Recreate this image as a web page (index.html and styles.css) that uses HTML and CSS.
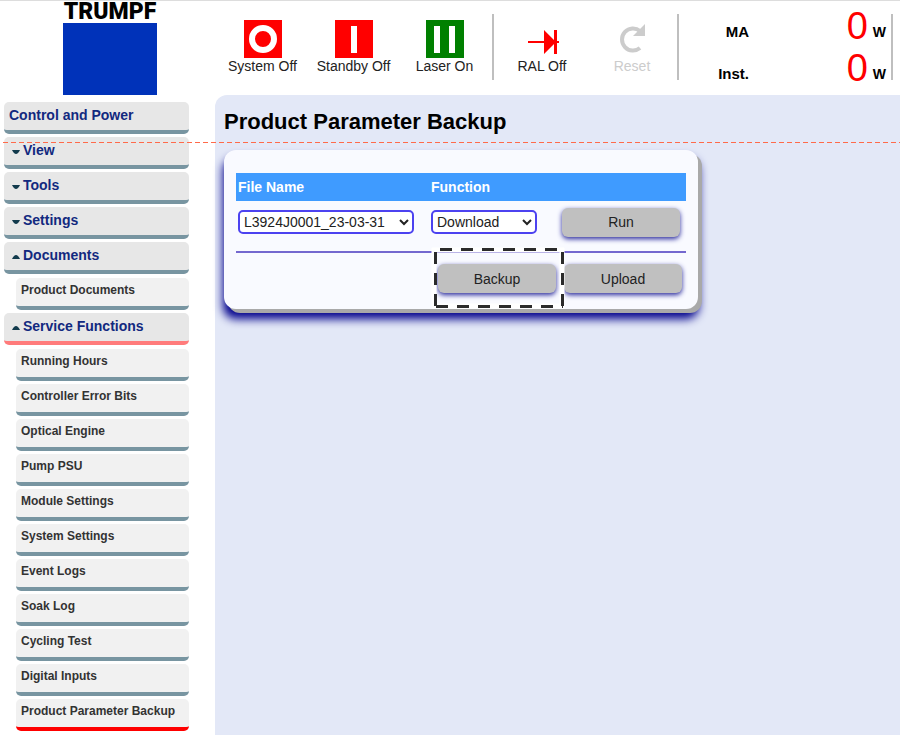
FILE: index.html
```html
<!DOCTYPE html>
<html lang="en">
<head>
<meta charset="utf-8">
<title>Product Parameter Backup</title>
<link rel="stylesheet" href="styles.css">
</head>
<body>
<div class="page">
  <aside class="side">
    <div class="logo">
      <span class="logo-name">TRUMPF</span>
      <div class="logo-square"></div>
    </div>
    <nav class="menu">
      <a class="item" href="#">Control and Power</a>
      <a class="item group" href="#"><svg class="caret" viewBox="0 0 8 4"><path d="M0 0h8Q6 4 4 4T0 0z"/></svg>View</a>
      <a class="item group" href="#"><svg class="caret" viewBox="0 0 8 4"><path d="M0 0h8Q6 4 4 4T0 0z"/></svg>Tools</a>
      <a class="item group" href="#"><svg class="caret" viewBox="0 0 8 4"><path d="M0 0h8Q6 4 4 4T0 0z"/></svg>Settings</a>
      <a class="item group" href="#"><svg class="caret" viewBox="0 0 8 4"><path d="M0 4h8Q6 0 4 0T0 4z"/></svg>Documents</a>
      <div class="submenu">
        <a class="item sub" href="#">Product Documents</a>
      </div>
      <a class="item group open" href="#"><svg class="caret" viewBox="0 0 8 4"><path d="M0 4h8Q6 0 4 0T0 4z"/></svg>Service Functions</a>
      <div class="submenu">
        <a class="item sub" href="#">Running Hours</a>
        <a class="item sub" href="#">Controller Error Bits</a>
        <a class="item sub" href="#">Optical Engine</a>
        <a class="item sub" href="#">Pump PSU</a>
        <a class="item sub" href="#">Module Settings</a>
        <a class="item sub" href="#">System Settings</a>
        <a class="item sub" href="#">Event Logs</a>
        <a class="item sub" href="#">Soak Log</a>
        <a class="item sub" href="#">Cycling Test</a>
        <a class="item sub" href="#">Digital Inputs</a>
        <a class="item sub current" href="#">Product Parameter Backup</a>
      </div>
    </nav>
  </aside>
  <div class="content">
    <header class="toolbar">
      <div class="tools tools-power">
        <button class="tool" type="button">
          <svg class="icon" viewBox="0 0 38 38"><rect width="38" height="38" fill="#f00"/><circle cx="19" cy="19" r="11" fill="none" stroke="#fff" stroke-width="6"/></svg>
          System Off
        </button>
        <button class="tool" type="button">
          <svg class="icon" viewBox="0 0 38 38"><rect width="38" height="38" fill="#f00"/><rect x="16" y="6" width="6" height="27" fill="#fff"/></svg>
          Standby Off
        </button>
        <button class="tool" type="button">
          <svg class="icon" viewBox="0 0 38 38"><rect width="38" height="38" fill="#008000"/><rect x="8" y="6" width="6" height="27" fill="#fff"/><rect x="23" y="6" width="6" height="27" fill="#fff"/></svg>
          Laser On
        </button>
      </div>
      <div class="tools tools-laser">
        <button class="tool" type="button">
          <svg class="icon" viewBox="0 0 38 38"><path d="M5 21h31v2H5zM21 10l12 12-12 12zM31 10h3v24h-3z" fill="#f00"/></svg>
          RAL Off
        </button>
        <button class="tool" type="button" disabled>
          <svg class="icon" viewBox="0 0 38 38"><path d="M27 28A11 11 0 1 1 27 11" fill="none" stroke="#ccc" stroke-width="4"/><path d="M32 4v12H20z" fill="#ccc"/></svg>
          Reset
        </button>
      </div>
      <dl class="readout">
        <div class="reading"><dt>MA</dt><dd><span class="value">0</span> W</dd></div>
        <div class="reading"><dt>Inst.</dt><dd><span class="value">0</span> W</dd></div>
      </dl>
    </header>
    <main class="main">
      <h1>Product Parameter Backup</h1>
      <form class="panel">
        <table>
          <thead>
            <tr><th class="col-file"><label for="file">File Name</label></th><th class="col-function"><label for="function">Function</label></th><th></th></tr>
          </thead>
          <tbody>
            <tr class="run-row">
              <td><select id="file" class="file"><option>L3924J0001_23-03-31</option></select></td>
              <td><select id="function" class="function"><option>Download</option></select></td>
              <td class="run-cell"><button class="button" type="button">Run</button></td>
            </tr>
            <tr class="backup-row">
              <td colspan="3">
                <div class="actions">
                  <div class="marked">
                    <button class="button" type="button">Backup</button>
                    <svg class="marker" viewBox="0 0 134 62"><path d="M3 1v60M131 1v60" class="marker-halo"/><path d="M1 3h132M1 59h132" class="marker-halo"/><path d="M4.500 5v56M131.500 5v56" class="marker-dash"/><path d="M9 2.500h122M5 59.500h127" class="marker-dash"/></svg>
                  </div>
                  <button class="button" type="button">Upload</button>
                </div>
              </td>
            </tr>
          </tbody>
        </table>
      </form>
    </main>
  </div>
  <div class="guide"></div>
</div>
</body>
</html>
```
FILE: styles.css
```css
* { box-sizing: border-box; }

body {
  margin: 0;
  background: #fff;
  color: #111;
  font: 14px/16px "Liberation Sans", Arial, sans-serif;
}

.page {
  position: relative;
  display: flex;
  min-height: 100vh;
  border-top: 1px solid #ddd;
}

/* Sidebar */
.side { flex: 0 0 215px; }

.logo {
  width: 94px;
  height: 94px;
  margin-left: 63px;
  display: flex;
  flex-direction: column;
  align-items: center;
}

.logo-name {
  font: 900 23px/22px Roboto, sans-serif;
  color: #000;
}

.logo-square {
  width: 100%;
  flex: 1;
  background: #0032b9;
}

.menu {
  display: flex;
  flex-direction: column;
  gap: 3px;
  padding: 7px 26px 0 4px;
}

.submenu {
  display: flex;
  flex-direction: column;
  gap: 3px;
  margin-top: 1px;
  padding-left: 12px;
}

.item {
  display: flex;
  align-items: center;
  height: 32px;
  padding: 0 5px 3px;
  border-bottom: 4px solid #7895a1;
  border-radius: 5px;
  background: #e7e7e7;
  color: #12297f;
  font-weight: bold;
  text-decoration: none;
  white-space: nowrap;
}

.group { padding-left: 8px; }
.open { border-bottom-color: #ff7b7b; }

.sub {
  padding-bottom: 4px;
  background: #f1f1f1;
  color: #333;
  font-size: 12px;
}

.current { border-bottom-color: #f00; }

.caret {
  width: 8px;
  height: 4px;
  margin: 4px 3px 0 0;
  fill: #123a4c;
}

/* Toolbar */
.content {
  flex: 1;
  min-width: 0;
  display: flex;
  flex-direction: column;
}

.toolbar {
  display: flex;
  height: 94px;
  padding: 13px 7px 15px 2px;
}

.tools {
  display: flex;
  border-right: 2px solid #bfbfbf;
}

.tools-power { flex: 0 0 277px; padding-right: 2px; }
.tools-laser { flex: 0 0 185px; padding-left: 3px; }

.tool {
  flex: 1;
  display: flex;
  flex-direction: column;
  align-items: center;
  padding: 6px 0 0;
  border: 0;
  background: none;
  color: #222;
  font: inherit;
  white-space: nowrap;
}

.tool:disabled { color: #ccc; }

.icon {
  width: 38px;
  height: 38px;
}

.readout {
  flex: 1;
  margin: 0;
  padding-right: 5px;
  border-right: 2px solid #bfbfbf;
  color: #000;
  font-weight: bold;
}

.reading {
  display: flex;
  justify-content: space-between;
  align-items: center;
  height: 42px;
  padding-bottom: 6px;
}

.reading dt { width: 70px; text-align: right; font-size: 15px; }

.reading dd {
  display: flex;
  align-items: center;
  gap: 5px;
  margin: 0;
}

.value {
  padding-bottom: 12px;
  color: #f00;
  font-size: 38px;
  font-weight: normal;
  line-height: 24px;
}

/* Main area */
.main {
  flex: 1;
  padding: 14px 9px;
  border-top-left-radius: 12px;
  background: #e3e8f7;
}

h1 {
  margin: 0 0 15px;
  color: #000;
  font-size: 22px;
  line-height: 26px;
}

.panel {
  max-width: 474px;
  padding: 23px 12px 12px;
  border-radius: 12px;
  background: #f9faff;
  box-shadow: 4px 4px 0 #a9a9a9, 0 9px 10px 1px #00008b;
}

table {
  width: 100%;
  border-collapse: collapse;
  table-layout: fixed;
}

th {
  height: 28px;
  padding: 0 2px;
  background: #3f9bff;
  color: #fff;
  text-align: left;
}

.col-file { width: 193px; }
.col-function { width: 122px; }

td { padding: 0 2px; }

.run-row td {
  height: 51px;
  padding-bottom: 8px;
  border-bottom: 2px solid #7468cf;
}

.run-row .run-cell { padding-right: 6px; text-align: right; }

.backup-row td { padding: 11px 4px 4px; }

select {
  height: 24px;
  border: 2px solid #4c42f0;
  border-radius: 5px;
  background: #fff;
  color: #222;
  font: inherit;
}

.file { width: 176px; }
.function { width: 106px; }

.actions {
  display: flex;
  justify-content: flex-end;
  gap: 8px;
}

.button {
  width: 118px;
  height: 29px;
  border: 0;
  border-radius: 6px;
  background: #c0c0c0;
  box-shadow: 0 2px 5px #2a2a9c;
  color: #222;
  font: inherit;
}

.marked { position: relative; z-index: 1; }

.marker {
  position: absolute;
  top: -17px;
  left: -7px;
  width: 134px;
  height: 62px;
  pointer-events: none;
}

.marker-halo { fill: none; stroke: #fff; stroke-width: 5; }

.marker-dash {
  fill: none;
  stroke: #2b2b2b;
  stroke-width: 3;
  stroke-dasharray: 12 9;
}

/* Horizontal guide drawn across the whole page */
.guide {
  position: absolute;
  top: 141px;
  left: 3px;
  right: 0;
  height: 1px;
  background: repeating-linear-gradient(90deg, #ff6a4a 0 5px, transparent 5px 8px);
}
```
